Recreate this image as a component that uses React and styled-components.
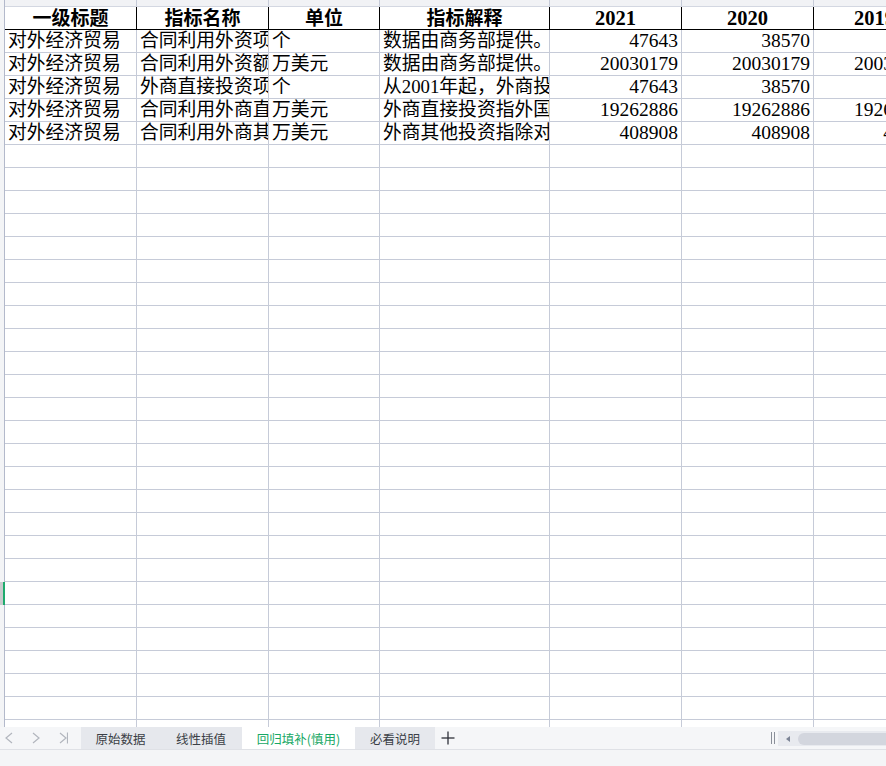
import styled, { createGlobalStyle } from "styled-components";

const GlobalStyle = createGlobalStyle`
  html, body {
    margin: 0;
    padding: 0;
    background: #ffffff;
  }
  * {
    box-sizing: border-box;
  }
`;

const COLS = [132, 132, 111, 170, 132, 132, 122];
const ROW_COUNT = 31;
const ACTIVE_ROW = 24;

const headers = ["一级标题", "指标名称", "单位", "指标解释", "2021", "2020", "2019"];

const rows = [
  ["对外经济贸易", "合同利用外资项目数", "个", "数据由商务部提供。", "47643", "38570", "4088"],
  ["对外经济贸易", "合同利用外资额", "万美元", "数据由商务部提供。", "20030179", "20030179", "20030179"],
  ["对外经济贸易", "外商直接投资项目数", "个", "从2001年起，外商投资企业数据包括…", "47643", "38570", "4088"],
  ["对外经济贸易", "合同利用外商直接投资", "万美元", "外商直接投资指外国投资者…", "19262886", "19262886", "19262886"],
  ["对外经济贸易", "合同利用外商其他投资", "万美元", "外商其他投资指除对外借款…", "408908", "408908", "40890"],
];

const Page = styled.div`
  width: 100vw;
  height: 100vh;
  display: flex;
  flex-direction: column;
  overflow: hidden;
  font-family: "Liberation Serif", "Noto Sans CJK SC", serif;
  color: #000;
`;

const SheetArea = styled.div`
  flex: 1;
  min-height: 0;
  display: flex;
  overflow: hidden;
  background: #fff;
`;

const Gutter = styled.div`
  width: 5px;
  flex-shrink: 0;
  display: flex;
  flex-direction: column;
  background: #f3f4f6;
  border-right: 1px solid #b3b9cb;
`;

const GutterCell = styled.div`
  height: ${(p) => p.$h}px;
  flex-shrink: 0;
  margin-right: ${(p) => (p.$active ? "-1px" : "0")};
  background: ${(p) => (p.$active ? "#c9cacd" : "transparent")};
  border-right: ${(p) => (p.$active ? "2px solid #1eaa6d" : "none")};
`;

const Grid = styled.div`
  flex: 1;
  min-width: 0;
  display: flex;
  flex-direction: column;
  overflow: hidden;
`;

const Row = styled.div`
  display: flex;
  flex-shrink: 0;
  height: ${(p) => p.$h}px;
  border-bottom: 1px solid ${(p) => p.$line};
  background: ${(p) => p.$bg || "#fff"};
`;

const Cell = styled.div`
  flex-shrink: 0;
  height: 100%;
  padding: 0 3px;
  border-right: 1px solid ${(p) => p.$line || "#c6cbd8"};
  white-space: nowrap;
  overflow: hidden;
  line-height: 22px;
  font-size: ${(p) => (p.$num ? "19.5px" : "18.8px")};
  text-align: ${(p) => p.$align || "left"};
`;

const HeadCell = styled(Cell)`
  font-weight: 700;
  text-align: center;
  font-size: ${(p) => (p.$num ? "20.5px" : "19px")};
  line-height: 23px;
`;

const TabBar = styled.div`
  height: 22px;
  flex-shrink: 0;
  display: flex;
  align-items: stretch;
  background: #f5f6f8;
  font-family: "Noto Sans CJK SC", "Noto Sans", sans-serif;
`;

const Nav = styled.div`
  width: 81px;
  display: flex;
  align-items: center;
  padding-left: 4px;
  gap: 17px;
  color: #b2b6be;
`;

const Tab = styled.div`
  width: ${(p) => p.$w}px;
  display: flex;
  align-items: center;
  justify-content: center;
  font-size: 12.5px;
  background: ${(p) => (p.$active ? "#ffffff" : "#e6e8ed")};
  color: ${(p) => (p.$active ? "#17a865" : "#3b3f46")};
`;

const AddTab = styled.div`
  width: 26px;
  display: flex;
  align-items: center;
  justify-content: center;
  color: #2d3139;
`;

const Spacer = styled.div`
  flex: 1;
`;

const Splitter = styled.div`
  width: 9px;
  display: flex;
  align-items: center;
  justify-content: center;
  gap: 2px;

  &::before,
  &::after {
    content: "";
    width: 1px;
    height: 12px;
    background: #8a8f99;
  }
`;

const ScrollTrack = styled.div`
  width: 108px;
  margin: 4px 0 3px 1px;
  background: #e8eaef;
  display: flex;
  align-items: center;
  padding-left: 8px;
  gap: 8px;
`;

const ArrowLeft = styled.div`
  width: 0;
  height: 0;
  border-top: 3px solid transparent;
  border-bottom: 3px solid transparent;
  border-right: 4px solid #7c8496;
`;

const Thumb = styled.div`
  flex: 1;
  height: 12px;
  border-radius: 6px 0 0 6px;
  background: #d3d6de;
`;

const StatusArea = styled.div`
  height: 17px;
  flex-shrink: 0;
  background: #f4f5f7;
  border-top: 1px solid #dfe1e6;
`;

const Chevron = ({ dir, bar }) => (
  <svg width="10" height="12" viewBox="0 0 10 12" fill="none" stroke="currentColor" strokeWidth="1.2">
    {dir === "left" ? <polyline points="8,1 2,6 8,11" /> : <polyline points="2,1 8,6 2,11" />}
    {bar && <line x1="9.5" y1="0.5" x2="9.5" y2="11.5" />}
  </svg>
);

const PlusIcon = () => (
  <svg width="14" height="14" viewBox="0 0 14 14" stroke="currentColor" strokeWidth="1.3">
    <line x1="7" y1="0.5" x2="7" y2="13.5" />
    <line x1="0.5" y1="7" x2="13.5" y2="7" />
  </svg>
);

const isNum = (v) => /^\d+$/.test(v);

const App = () => {
  const emptyRows = ROW_COUNT - rows.length;

  return (
    <Page>
      <GlobalStyle />
      <SheetArea>
        <Gutter>
          <GutterCell $h={7} />
          <GutterCell $h={23} />
          {Array.from({ length: ROW_COUNT }).map((_, i) => (
            <GutterCell key={i} $h={23} $active={i === ACTIVE_ROW} />
          ))}
        </Gutter>
        <Grid>
          <Row $h={7} $line="#d3d7e1" $bg="#f1f2f5">
            {COLS.map((w, i) => (
              <Cell key={i} style={{ width: w }} />
            ))}
          </Row>
          <Row $h={23} $line="#000">
            {headers.map((h, i) => (
              <HeadCell key={i} style={{ width: COLS[i] }} $line="#000" $num={isNum(h)}>
                {h}
              </HeadCell>
            ))}
          </Row>
          {rows.map((r, ri) => (
            <Row key={ri} $h={23} $line="#c6cbd8">
              {r.map((v, ci) => (
                <Cell key={ci} style={{ width: COLS[ci] }} $num={isNum(v)} $align={isNum(v) ? "right" : "left"}>
                  {v}
                </Cell>
              ))}
            </Row>
          ))}
          {Array.from({ length: emptyRows }).map((_, ri) => (
            <Row key={`e${ri}`} $h={23} $line="#c6cbd8">
              {COLS.map((w, ci) => (
                <Cell key={ci} style={{ width: w }} />
              ))}
            </Row>
          ))}
        </Grid>
      </SheetArea>
      <TabBar>
        <Nav>
          <Chevron dir="left" />
          <Chevron dir="right" />
          <Chevron dir="right" bar />
        </Nav>
        <Tab $w={79}>原始数据</Tab>
        <Tab $w={82}>线性插值</Tab>
        <Tab $w={113} $active>
          回归填补(慎用)
        </Tab>
        <Tab $w={80}>必看说明</Tab>
        <AddTab>
          <PlusIcon />
        </AddTab>
        <Spacer />
        <Splitter />
        <ScrollTrack>
          <ArrowLeft />
          <Thumb />
        </ScrollTrack>
      </TabBar>
      <StatusArea />
    </Page>
  );
};

export default App;
